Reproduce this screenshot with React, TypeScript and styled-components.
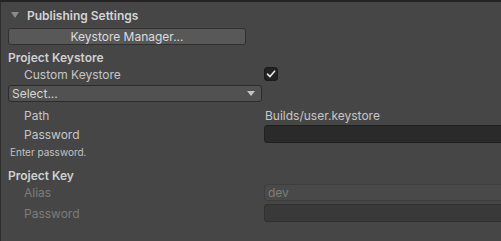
import React from "react";
import styled, { createGlobalStyle } from "styled-components";

const Global = createGlobalStyle`
  html, body {
    margin: 0;
    padding: 0;
    background: #464646;
  }
  * {
    box-sizing: border-box;
  }
`;

const Panel = styled.div`
  width: 501px;
  height: 241px;
  overflow: hidden;
  background: #464646;
  border-top: 2px solid #242424;
  border-left: 1px solid #2e2e2e;
  font-family: Inter, "Liberation Sans", sans-serif;
  font-size: 12px;
  color: #c6c6c6;
  display: flex;
  flex-direction: column;
  padding-left: 7px;
`;

const Foldout = styled.div`
  display: flex;
  align-items: center;
  height: 20px;
  margin-top: 3px;
  font-weight: 600;
  color: #d4d4d4;
`;

const Arrow = styled.span`
  width: 0;
  height: 0;
  border-left: 4px solid transparent;
  border-right: 4px solid transparent;
  border-top: 6px solid #8a8a8a;
  margin: 0 8px 0 3px;
`;

const Button = styled.div`
  height: 17px;
  width: 238px;
  margin-top: 3px;
  background: #585858;
  border: 1px solid #303030;
  border-radius: 3px;
  display: flex;
  align-items: center;
  justify-content: center;
  color: #dcdcdc;
`;

const SectionLabel = styled.div<{ $top: number }>`
  height: 18px;
  margin-top: ${(p) => p.$top}px;
  display: flex;
  align-items: center;
  font-weight: 600;
  color: #d0d0d0;
`;

const Row = styled.div<{ $top?: number; $h?: number }>`
  display: flex;
  align-items: center;
  height: ${(p) => p.$h ?? 18}px;
  margin-top: ${(p) => p.$top ?? 0}px;
`;

const Label = styled.span<{ $disabled?: boolean }>`
  width: 256px;
  flex-shrink: 0;
  padding-left: 16px;
  color: ${(p) => (p.$disabled ? "#7c7c7c" : "#c6c6c6")};
`;

const Value = styled.span`
  padding-left: 1px;
  color: #c6c6c6;
`;

const Checkbox = styled.div`
  width: 14px;
  height: 14px;
  border-radius: 3px;
  background: #222222;
  border: 1px solid #1b1b1b;
  display: flex;
  align-items: center;
  justify-content: center;
`;

const Dropdown = styled.div`
  width: 254px;
  height: 17px;
  margin-top: 3px;
  background: #515151;
  border: 1px solid #2c2c2c;
  border-radius: 3px;
  display: flex;
  align-items: center;
  justify-content: space-between;
  padding: 0 6px 0 3px;
  color: #d6d6d6;
`;

const SmallArrow = styled.span`
  width: 0;
  height: 0;
  border-left: 4px solid transparent;
  border-right: 4px solid transparent;
  border-top: 5px solid #c4c4c4;
`;

const Field = styled.div<{ $variant: "dark" | "disabled" | "disabledDark" }>`
  flex: 1;
  height: 100%;
  margin-right: -4px;
  border-radius: 3px;
  display: flex;
  align-items: center;
  padding-left: 3px;
  color: #7e7e7e;
  background: ${(p) =>
    p.$variant === "dark" ? "#2a2a2a" : p.$variant === "disabled" ? "#494949" : "#393939"};
  border: 1px solid
    ${(p) => (p.$variant === "dark" ? "#202020" : p.$variant === "disabled" ? "#3d3d3d" : "#303030")};
`;

const Hint = styled.div`
  height: 16px;
  margin-top: 1px;
  display: flex;
  align-items: center;
  font-size: 10px;
  padding-left: 2px;
  color: #c2c2c2;
`;

export default function App() {
  return (
    <>
      <Global />
      <Panel>
        <Foldout>
          <Arrow />
          Publishing Settings
        </Foldout>
        <Button>Keystore Manager...</Button>
        <SectionLabel $top={3}>Project Keystore</SectionLabel>
        <Row $h={16}>
          <Label>Custom Keystore</Label>
          <Checkbox>
            <svg width="10" height="10" viewBox="0 0 10 10">
              <polyline
                points="1.5,5.2 4,7.6 8.6,2.2"
                fill="none"
                stroke="#e8e8e8"
                strokeWidth="1.6"
                strokeLinecap="round"
                strokeLinejoin="round"
              />
            </svg>
          </Checkbox>
        </Row>
        <Dropdown>
          Select...
          <SmallArrow />
        </Dropdown>
        <Row $top={4}>
          <Label>Path</Label>
          <Value>Builds/user.keystore</Value>
        </Row>
        <Row $top={1}>
          <Label>Password</Label>
          <Field $variant="dark" />
        </Row>
        <Hint>Enter password.</Hint>
        <SectionLabel $top={6}>Project Key</SectionLabel>
        <Row $h={17}>
          <Label $disabled>Alias</Label>
          <Field $variant="disabled">dev</Field>
        </Row>
        <Row $top={3}>
          <Label $disabled>Password</Label>
          <Field $variant="disabledDark" />
        </Row>
      </Panel>
    </>
  );
}
